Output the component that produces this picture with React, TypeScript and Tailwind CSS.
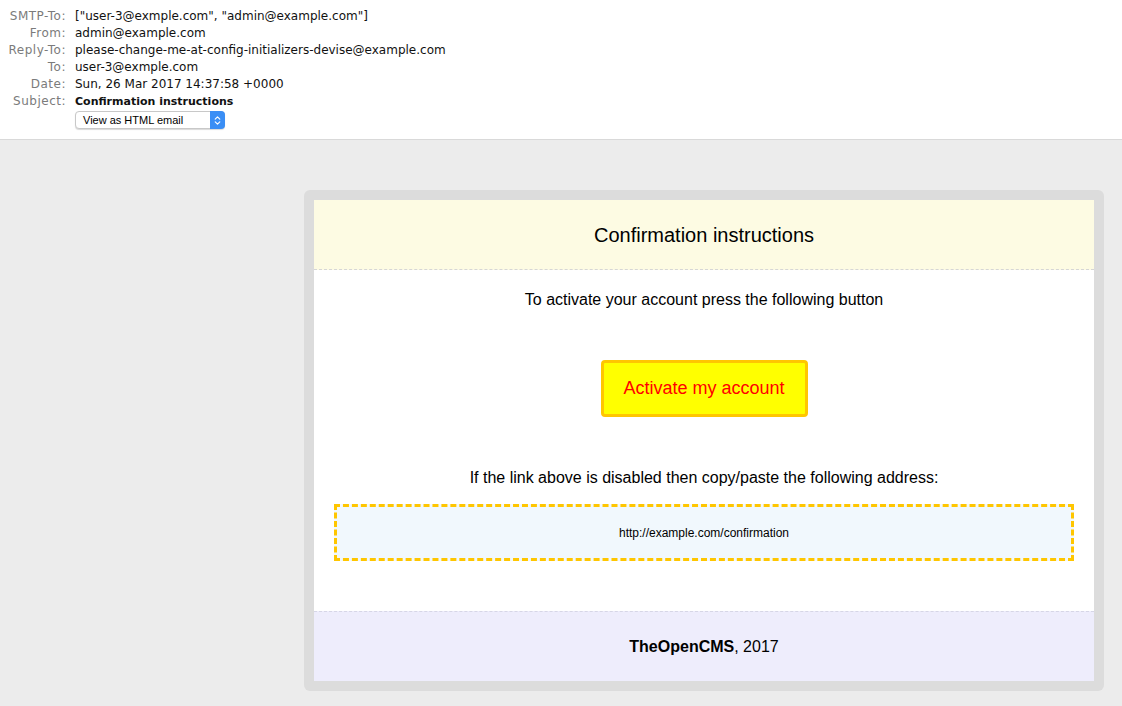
import { ChevronsUpDown } from "lucide-react"

const meta = [
  { label: "SMTP-To:", value: '["user-3@exmple.com", "admin@example.com"]' },
  { label: "From:", value: "admin@example.com" },
  { label: "Reply-To:", value: "please-change-me-at-config-initializers-devise@example.com" },
  { label: "To:", value: "user-3@exmple.com" },
  { label: "Date:", value: "Sun, 26 Mar 2017 14:37:58 +0000" },
]

export default function App() {
  return (
    <div className="min-h-[706px] bg-[#ececec] font-['Liberation_Sans',Arial,sans-serif]">
      {/* Mail headers */}
      <div className="h-[140px] bg-white border-b border-[#d9d9d9] pt-[8px] font-['DejaVu_Sans',sans-serif] text-[12px] leading-[17px]">
        {meta.map((m) => (
          <div key={m.label} className="flex">
            <div className="w-[66px] text-right text-[#7b7b7b] tracking-[0.5px]">{m.label}</div>
            <div className="pl-[9px] text-[#111]">{m.value}</div>
          </div>
        ))}
        <div className="flex">
          <div className="w-[66px] text-right text-[#7b7b7b] tracking-[0.5px]">Subject:</div>
          <div className="pl-[9px] text-[11px] font-bold text-[#111]">Confirmation instructions</div>
        </div>
        <div className="pl-[75px] pt-[1px]">
          <div className="flex h-[18px] w-[150px] items-center rounded-[4px] border border-[#c8c8c8] bg-white shadow-[0_1px_1px_rgba(0,0,0,0.15)]">
            <span className="flex-1 pl-[7px] text-[11px] leading-none text-black font-['Liberation_Sans',Arial,sans-serif]">
              View as HTML email
            </span>
            <span className="flex h-[18px] w-[15px] items-center justify-center rounded-r-[4px] bg-[#3a8ef5] -mr-px -my-px">
              <ChevronsUpDown className="h-[11px] w-[11px] text-white" strokeWidth={2.5} />
            </span>
          </div>
        </div>
      </div>

      {/* Email body */}
      <div className="flex justify-end pr-[18px] pt-[50px] pb-[16px]">
        <div className="w-[800px] rounded-[6px] bg-[#dcdcdc] p-[10px]">
          <div className="bg-white">
            <div className="flex h-[70px] items-center justify-center border-b border-dashed border-[#d6d6d6] bg-[#fdfbe3] text-[20px] text-black">
              Confirmation instructions
            </div>

            <div className="px-[20px] pt-[20px] pb-[50px] text-center text-black">
              <p className="text-[16px] leading-[19px]">To activate your account press the following button</p>

              <div className="flex justify-center pt-[51px] pb-[51px]">
                <div className="flex h-[57px] w-[207px] items-center justify-center rounded-[4px] border-[3px] border-[#ffc600] bg-[#ffff00] text-[18px] text-[#ff0000]">
                  Activate my account
                </div>
              </div>

              <p className="text-[16px] leading-[19px]">If the link above is disabled then copy/paste the following address:</p>

              <div className="mt-[17px] flex h-[57px] items-center justify-center border-[3px] border-dashed border-[#ffc600] bg-[#f1f8fd] text-[12px]">
                http://example.com/confirmation
              </div>
            </div>

            <div className="flex h-[70px] items-center justify-center border-t border-dashed border-[#d6d6e6] bg-[#eeedfc] text-[16px] text-black">
              <span>
                <b>TheOpenCMS</b>, 2017
              </span>
            </div>
          </div>
        </div>
      </div>
    </div>
  )
}
